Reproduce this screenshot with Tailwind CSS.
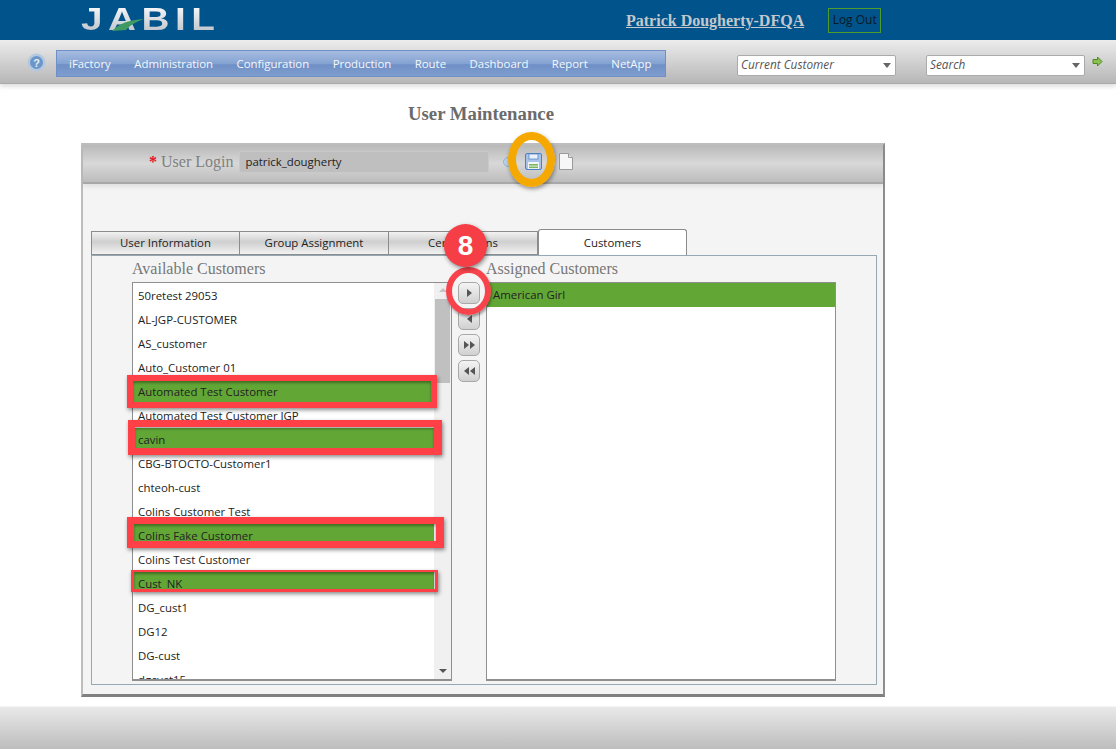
<!DOCTYPE html>
<html><head><meta charset="utf-8"><script src="https://cdn.jsdelivr.net/npm/@tailwindcss/browser@4"></script></head>
<body class="bg-white">
<div class="relative w-[1116px] h-[749px] overflow-hidden font-['Open_Sans',sans-serif] text-[11.4px] text-[#222]">
  <header class="h-10 bg-[#00538b] flex items-start">
    <div class="relative ml-[81px] mt-[3px] w-[134px] h-[34px]">
      <span class="block origin-left scale-x-125 font-['Liberation_Sans',sans-serif] font-bold text-[31px] leading-[34px] tracking-[4.4px] whitespace-nowrap bg-gradient-to-b from-white to-[#b3bbc2] bg-clip-text text-transparent">JABIL</span>
      <svg class="absolute left-[31px] top-[14px]" width="32" height="14" viewBox="0 0 32 14"><path d="M0 14 Q10 3 32 2 Q20 6 14 13 Z" fill="#3f9a63"/></svg>
    </div>
    <a class="ml-[411px] mt-[11px] font-['Liberation_Serif',serif] font-bold text-[16px] leading-5 underline text-[#c4c8cc]">Patrick Dougherty-DFQA</a>
    <div class="ml-[24px] mt-2 w-[53px] h-[25px] pb-[2px] border border-[#4e9b2e] flex items-center justify-center text-[12px] text-[#0a1a26]">Log Out</div>
  </header>
  <div class="h-[44px] bg-gradient-to-b from-[#ececec] to-[#b7b7b7] border-b border-[#aaa] shadow-[0_3px_4px_rgba(0,0,0,0.12)] flex items-center relative">
    <svg class="ml-[27px] mt-[1px]" width="19" height="19" viewBox="0 0 19 19"><circle cx="9.5" cy="9.5" r="9" fill="#b4c8e0"/><circle cx="9.5" cy="9.5" r="6.5" fill="#6b96c9"/><text x="9.5" y="13.5" text-anchor="middle" font-family="Liberation Sans" font-weight="700" font-size="11" fill="#e8eef6">?</text></svg>
    <nav class="ml-[10px] mt-[4px] w-[610px] h-[27px] border border-[#6f8fc8] bg-[linear-gradient(#a6bce0_0%,#85a3d2_50%,#6f90c6_55%,#7f9dcf_100%)] flex items-center pl-[12px] gap-[23.5px] text-[#f4f7fb] text-[11.4px] whitespace-nowrap">
      <span>iFactory</span><span>Administration</span><span>Configuration</span><span>Production</span><span>Route</span><span>Dashboard</span><span>Report</span><span>NetApp</span>
    </nav>
    <div class="ml-[71px] w-[159px] h-[21px] mt-[7px] bg-white border border-[#aaa] rounded-[2px] flex items-center justify-between pl-[3px] pr-[3px] italic text-[#555] text-[11.8px]">Current Customer<span class="w-0 h-0 mr-[1px] border-x-[4px] border-t-[5px] border-x-transparent border-t-[#666]"></span></div>
    <div class="ml-[30px] w-[159px] h-[21px] mt-[7px] bg-white border border-[#aaa] rounded-[2px] flex items-center justify-between pl-[3px] pr-[3px] italic text-[#555] text-[11.8px]">Search<span class="w-0 h-0 mr-[1px] border-x-[4px] border-t-[5px] border-x-transparent border-t-[#666]"></span></div>
    <svg class="ml-[7px] mt-0" width="11" height="11" viewBox="0 0 11 11"><path d="M1 3.5H5.5V1L10 5.5L5.5 10V7.5H1Z" fill="#8cc152" stroke="#4c8a22" stroke-width="1"/></svg>
  </div>
  <main class="pt-[20px]">
    <h1 class="w-[962px] text-center font-['Liberation_Serif',serif] font-bold text-[18.75px] leading-5 text-[#6b6b6b]">User Maintenance</h1>
    <section class="ml-[81px] mt-[19px] w-[804px] h-[554px] bg-[#f4f4f4] border-2 border-t-[2px] border-[#bdbdbd] border-r-[#8e8e8e] border-b-[3px] border-b-[#808080]">
      <div class="h-[39px] pb-[4px] bg-[linear-gradient(#b9b9b9,#d8d8d8_50%,#bcbcbc)] border-b-2 border-[#a8a8a8] flex items-center shadow-[0_3px_4px_rgba(0,0,0,0.08)]">
        <span class="ml-[66px] font-['Liberation_Serif',serif] text-[16px] text-[#808080] whitespace-nowrap"><b class="text-[#e8112d]">*</b> User Login</span>
        <div class="ml-[6px] w-[250px] h-[22px] bg-[#bfbfbf] border border-[#c9c9c9] flex items-center pl-[5px] text-[#222]">patrick_dougherty</div>
        <svg class="ml-[13px]" width="8" height="12" viewBox="0 0 8 12"><circle cx="6" cy="6" r="4.5" fill="#b9d2ee" stroke="#8fb4dd"/></svg>
        <svg class="ml-[15px]" width="17" height="17" viewBox="0 0 17 17"><rect x="0.5" y="0.5" width="16" height="16" rx="1.5" fill="#a9c3e8" stroke="#4d7fc4"/><rect x="4" y="1" width="9" height="5" fill="#eaf1fb" stroke="#4d7fc4" stroke-width="0.7"/><rect x="3" y="9" width="11" height="7" fill="#f2f6fb"/><rect x="4" y="11" width="9" height="1.6" fill="#7bb661"/><rect x="4" y="13.5" width="9" height="1.6" fill="#7bb661"/></svg>
        <svg class="ml-[17px]" width="14" height="17" viewBox="0 0 14 17"><path d="M0.5 0.5H9.5L13.5 4.5V16.5H0.5Z" fill="#f7f7f7" stroke="#9a9a9a"/><path d="M9.5 0.5V4.5H13.5" fill="#e2e2e2" stroke="#9a9a9a"/></svg>
      </div>
      <div class="pl-[8px] pt-[45px]">
        <div class="flex items-end h-[26px]">
          <div class="w-[149px] h-[24px] border border-[#8c8c8c] bg-[linear-gradient(#f2f2f2,#cfcfcf_45%,#f2f2f2)] flex items-center justify-center">User Information</div>
          <div class="w-[149px] h-[24px] border border-[#8c8c8c] border-l-0 bg-[linear-gradient(#f2f2f2,#cfcfcf_45%,#f2f2f2)] flex items-center justify-center">Group Assignment</div>
          <div class="w-[149px] h-[24px] border border-[#8c8c8c] border-l-0 bg-[linear-gradient(#f2f2f2,#cfcfcf_45%,#f2f2f2)] flex items-center justify-center">Certifications</div>
          <div class="w-[149px] h-[26px] border border-[#8c8c8c] border-b-0 rounded-t-[3px] bg-white flex items-center justify-center">Customers</div>
        </div>
        <div class="w-[786px] h-[430px] border border-[#97a8b5] flex pl-[40px]">
          <div class="w-[320px]">
            <div class="h-[26px] flex items-center font-['Liberation_Serif',serif] text-[16px] text-[#777]">Available Customers</div>
            <div class="h-[399px] w-[320px] border border-[#8f8f8f] border-b-2 bg-white flex overflow-hidden">
              <ul class="flex-1 pt-[1px] leading-[24px] [&>li]:h-[24px] [&>li]:pl-[5px] whitespace-nowrap">
                <li>50retest 29053</li><li>AL-JGP-CUSTOMER</li><li>AS_customer</li><li>Auto_Customer 01</li>
                <li class="bg-[#62a736]">Automated Test Customer</li><li>Automated Test Customer JGP</li>
                <li class="bg-[#62a736]">cavin</li><li>CBG-BTOCTO-Customer1</li><li>chteoh-cust</li><li>Colins Customer Test</li>
                <li class="bg-[#62a736]">Colins Fake Customer</li><li>Colins Test Customer</li>
                <li class="bg-[linear-gradient(#62a736_20px,transparent_20px)]">Cust_NK</li><li>DG_cust1</li><li>DG12</li><li>DG-cust</li><li>dgcust15</li>
              </ul>
              <div class="w-[17px] bg-[#f0f0f0] flex flex-col items-center pt-[5px] relative">
                <span class="w-0 h-0 border-x-[4px] border-b-[4px] border-x-transparent border-b-[#c4c4c4]"></span>
                <span class="mt-[7px] w-[15px] h-[84px] bg-[#c0c0c0]"></span>
                <span class="mt-auto mb-[6px] w-0 h-0 border-x-[4px] border-t-[4px] border-x-transparent border-t-[#555]"></span>
              </div>
            </div>
          </div>
          <div class="w-[34px] pt-[26px] pl-[6px] flex flex-col gap-[4px]">
            <button class="w-[22px] h-[22px] rounded-[5px] border border-[#a8a8a8] bg-[linear-gradient(#f4f4f4,#d0d0d0)] flex items-center justify-center"><span class="w-0 h-0 border-y-[4px] border-l-[5px] border-y-transparent border-l-[#555]"></span></button>
            <button class="w-[22px] h-[22px] rounded-[5px] border border-[#a8a8a8] bg-[linear-gradient(#f4f4f4,#d0d0d0)] flex items-center justify-center"><span class="w-0 h-0 border-y-[4px] border-r-[5px] border-y-transparent border-r-[#555]"></span></button>
            <button class="w-[22px] h-[22px] rounded-[5px] border border-[#a8a8a8] bg-[linear-gradient(#f4f4f4,#d0d0d0)] flex items-center justify-center"><span class="w-0 h-0 border-y-[4px] border-l-[5px] border-y-transparent border-l-[#555]"></span><span class="w-0 h-0 ml-[1px] border-y-[4px] border-l-[5px] border-y-transparent border-l-[#555]"></span></button>
            <button class="w-[22px] h-[22px] rounded-[5px] border border-[#a8a8a8] bg-[linear-gradient(#f4f4f4,#d0d0d0)] flex items-center justify-center"><span class="w-0 h-0 border-y-[4px] border-r-[5px] border-y-transparent border-r-[#555]"></span><span class="w-0 h-0 ml-[1px] border-y-[4px] border-r-[5px] border-y-transparent border-r-[#555]"></span></button>
          </div>
          <div class="w-[350px]">
            <div class="h-[26px] flex items-center font-['Liberation_Serif',serif] text-[16px] text-[#777]">Assigned Customers</div>
            <div class="h-[399px] border border-[#8f8f8f] border-b-2 bg-white">
              <div class="h-[24px] bg-[#62a736] leading-[24px] pl-[6px]">American Girl</div>
            </div>
          </div>
        </div>
      </div>
    </section>
  </main>
  <footer class="absolute left-0 right-0 bottom-0 h-[43px] border-t border-[#f4f4f4] bg-gradient-to-b from-[#e9e9e9] to-[#bdbdbd]"></footer>

  <div class="absolute left-[508px] top-[132px] w-[47px] h-[55px] rounded-[50%] border-[8px] border-[#f5a800] shadow-[1px_2px_4px_rgba(0,0,0,0.4)]"></div>
  <div class="absolute left-[127px] top-[375px] w-[310px] h-[33px] border-[6px] border-[#ff4046] shadow-[1px_2px_4px_rgba(0,0,0,0.45),inset_0_2px_3px_rgba(0,0,0,0.35)]"></div>
  <div class="absolute left-[128px] top-[420px] w-[314px] h-[35px] border-[7px] border-r-[8px] border-[#ff4046] shadow-[1px_2px_4px_rgba(0,0,0,0.45),inset_0_2px_3px_rgba(0,0,0,0.35)]"></div>
  <div class="absolute left-[127px] top-[517px] w-[317px] h-[31px] border-[7px] border-r-[8px] border-[#ff4046] shadow-[1px_2px_4px_rgba(0,0,0,0.45),inset_0_2px_3px_rgba(0,0,0,0.35)]"></div>
  <div class="absolute left-[131px] top-[570px] w-[307px] h-[22px] border-[3px] border-t-[2px] border-[#ff4046] shadow-[1px_2px_4px_rgba(0,0,0,0.45),inset_0_2px_3px_rgba(0,0,0,0.35)]"></div>
  <div class="absolute left-[446px] top-[267px] w-[45px] h-[48px] rounded-[50%] border-[6px] border-[#f8434c] shadow-[1px_2px_3px_rgba(0,0,0,0.4)]"></div>
  <div class="absolute left-[444px] top-[224px] w-[43px] h-[43px] rounded-full bg-[#f53e46] shadow-[1px_2px_4px_rgba(0,0,0,0.45)] flex items-center justify-center font-['Liberation_Sans',sans-serif] font-bold text-[28px] text-white">8</div>
</div>
</body></html>
